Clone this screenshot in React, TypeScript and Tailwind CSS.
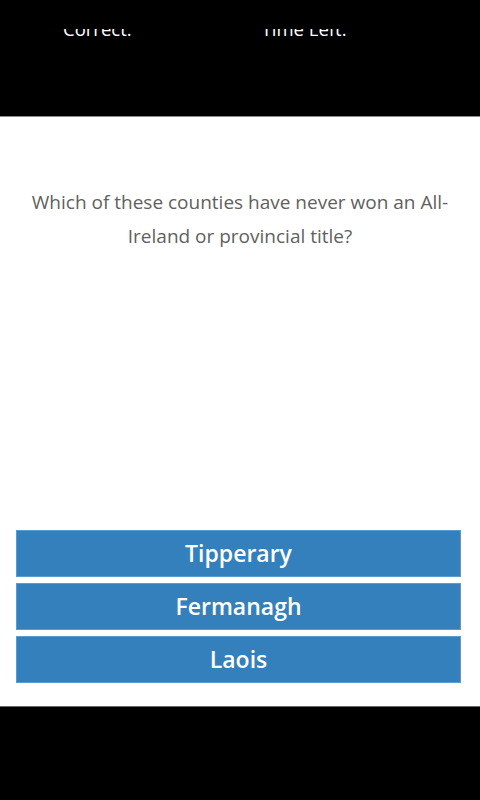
const answers = ["Tipperary", "Fermanagh", "Laois"];

export default function App() {
  return (
    <div
      className="flex h-[800px] w-[480px] flex-col bg-black"
      style={{ fontFamily: '"Open Sans", "Noto Sans", sans-serif' }}
    >
      {/* score bar, top of the labels is cut off */}
      <div className="h-[116px] shrink-0 bg-black">
        <div className="mt-[29px] h-[8px] overflow-hidden">
          <div className="-mt-[12px] flex text-[18.5px] leading-[24px] text-white">
            <span className="ml-[63px]">Correct:</span>
            <span className="ml-[130px]">Time Left:</span>
          </div>
        </div>
      </div>

      <div className="flex h-[590px] shrink-0 flex-col border-t border-[#8a8a8a] bg-white">
        <p className="mt-[68px] px-[20px] text-center text-[19px] leading-[34px] text-[#5f5f5f]">
          Which of these counties have never won an All-Ireland or provincial title?
        </p>

        <div className="mt-auto mb-[23px] flex flex-col gap-[6px] px-[16px] pr-[19px]">
          {answers.map((a) => (
            <button
              key={a}
              className="h-[47px] border border-[#5c9bd0] bg-[#3380bd] text-[23px] font-semibold text-white"
            >
              {a}
            </button>
          ))}
        </div>
      </div>

      <div className="flex-1 border-t border-[#6a6a6a] bg-black" />
    </div>
  );
}
